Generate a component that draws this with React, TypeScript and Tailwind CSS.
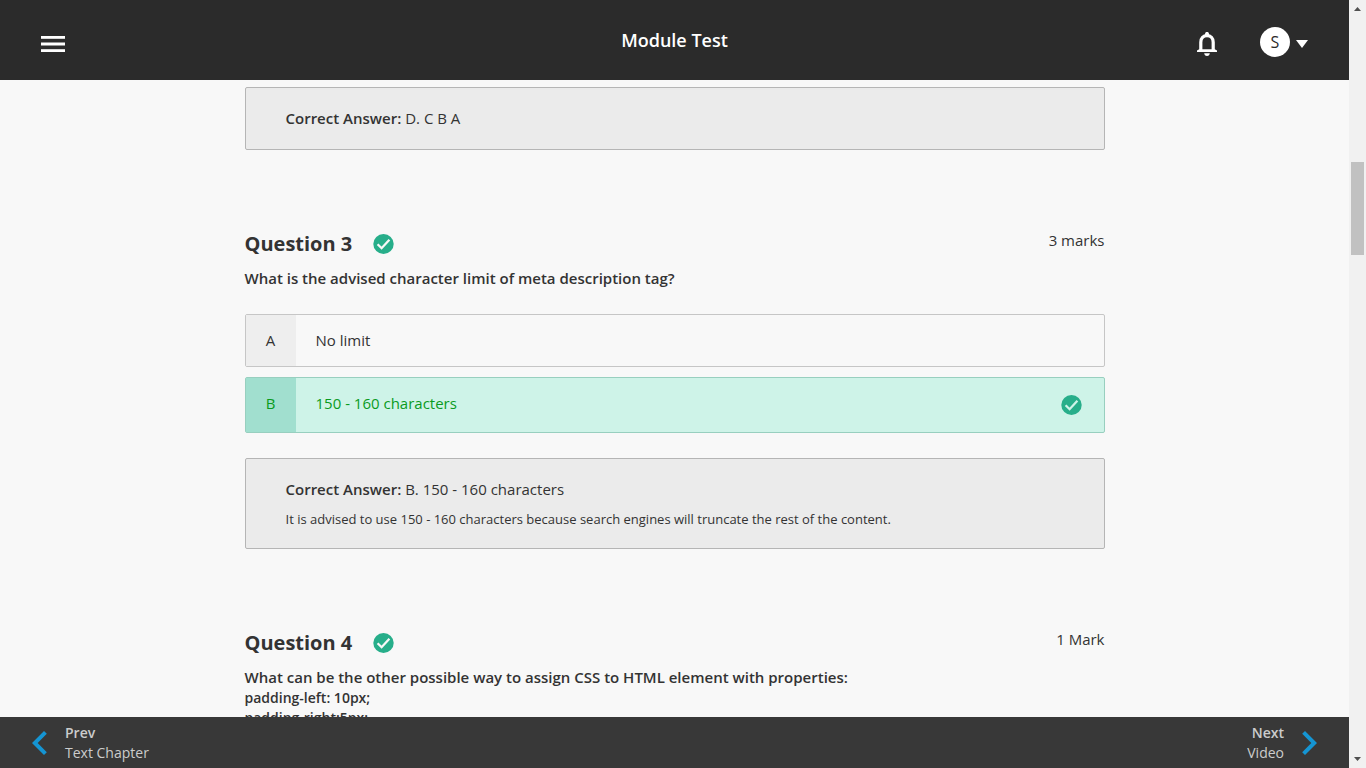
import React from "react";
import { MdChevronLeft, MdChevronRight } from "react-icons/md";

type Option = { letter: string; text: string; correct?: boolean };

function MenuIcon() {
  return (
    <svg width="24" height="16" viewBox="0 0 24 16" fill="currentColor" aria-hidden="true">
      <rect width="24" height="2.8" />
      <rect y="6.5" width="24" height="3" />
      <rect y="13.2" width="24" height="2.8" />
    </svg>
  );
}

function BellIcon() {
  return (
    <svg width="20" height="24" viewBox="0 0 20 24" aria-hidden="true">
      <path
        d="M3.8 18.6V10.2C3.8 6 6.3 3.6 10 3.6S16.2 6 16.2 10.2V18.6"
        fill="none"
        stroke="currentColor"
        strokeWidth="3.2"
      />
      <path d="M8 3.4V1.9a2 2 0 0 1 4 0V3.4Z" fill="currentColor" />
      <path d="M0 20V18.6L2.2 17.2H17.8L20 18.6V20Z" fill="currentColor" />
      <path d="M7.2 21.2H12.8C12.8 22.8 11.6 24 10 24S7.2 22.8 7.2 21.2Z" fill="currentColor" />
    </svg>
  );
}

function CheckBadge({ tick }: { tick: string }) {
  return (
    <svg width="21" height="20" viewBox="0 0 21 20" role="img" aria-label="Correct" className="shrink-0">
      <ellipse cx="10.5" cy="10" rx="10.2" ry="10" fill="#27ae8a" />
      <path d="M4.6 10.2L8.6 14.2L16.4 5.8" fill="none" stroke={tick} strokeWidth="2.3" />
    </svg>
  );
}

function TopBar() {
  return (
    <header className="grid h-20 shrink-0 grid-cols-[1fr_auto_1fr] items-center bg-[#2b2b2b] text-white">
      <div className="flex pt-2 pl-[41px]">
        <button type="button" aria-label="Open menu">
          <MenuIcon />
        </button>
      </div>
      <h1 className="text-lg font-semibold">Module Test</h1>
      <div className="flex items-center justify-end gap-[43px] pt-1 pr-[41px]">
        <button type="button" aria-label="Notifications" className="pt-1">
          <BellIcon />
        </button>
        <button type="button" aria-label="Account menu" className="flex items-center gap-1.5">
          <span className="flex size-[30px] items-center justify-center rounded-full bg-white text-base text-[#2b2b2b]">
            S
          </span>
          <svg width="12" height="8" viewBox="0 0 12 8" className="mt-1" fill="currentColor" aria-hidden="true">
            <path d="M0 0H12L6 8Z" />
          </svg>
        </button>
      </div>
    </header>
  );
}

function AnswerBox({ answer, note }: { answer: string; note?: string }) {
  return (
    <div className="rounded-xs border border-[#b5b5b5] bg-[#ebebeb] px-10 py-5">
      <p className="text-[15px] leading-[21px]">
        <span className="font-semibold">Correct Answer:</span> {answer}
      </p>
      {note && <p className="mt-2.5 text-[13px] leading-[18px]">{note}</p>}
    </div>
  );
}

function QuestionHeader({ title, marks }: { title: string; marks: string }) {
  return (
    <div className="flex items-start justify-between">
      <h2 className="flex items-center gap-[21px] text-xl leading-7 font-bold">
        {title}
        <CheckBadge tick="#f8f8f8" />
      </h2>
      <span className="text-[15px] leading-[21px]">{marks}</span>
    </div>
  );
}

function OptionRow({ letter, text, correct }: Option) {
  if (correct) {
    return (
      <li className="flex h-14 rounded-xs border border-[#98cfbf] bg-[#cef3e8] text-[15px] text-[#0a9b1e]">
        <span className="flex w-[50px] items-center justify-center bg-[#a1dfcf] pb-1">{letter}</span>
        <span className="flex flex-1 items-center px-5 pb-1">{text}</span>
        <span className="mr-[22px] flex items-center">
          <CheckBadge tick="#cef3e8" />
        </span>
      </li>
    );
  }
  return (
    <li className="flex h-[53px] rounded-xs border border-[#c6c6c6] text-[15px]">
      <span className="flex w-[50px] items-center justify-center bg-[#eeeeee]">{letter}</span>
      <span className="flex flex-1 items-center px-5">{text}</span>
    </li>
  );
}

const options: Option[] = [
  { letter: "A", text: "No limit" },
  { letter: "B", text: "150 - 160 characters", correct: true },
];

function BottomBar() {
  return (
    <nav className="flex h-[51px] shrink-0 items-center justify-between bg-[#383838] px-4 text-sm leading-5 text-[#cccccc]">
      <a href="#prev" className="flex items-center gap-px">
        <MdChevronLeft size={48} className="text-[#1595d3]" />
        <span>
          <span className="block font-semibold">Prev</span>
          <span className="block">Text Chapter</span>
        </span>
      </a>
      <a href="#next" className="flex items-center gap-px text-right">
        <span>
          <span className="block font-semibold">Next</span>
          <span className="block">Video</span>
        </span>
        <MdChevronRight size={48} className="text-[#1595d3]" />
      </a>
    </nav>
  );
}

function ScrollTrack() {
  return (
    <div className="flex w-[17px] shrink-0 flex-col items-center bg-[#f1f1f1] py-[7px]" aria-hidden="true">
      <svg width="7" height="4" viewBox="0 0 7 4" fill="#505050">
        <path d="M0 4H7L3.5 0Z" />
      </svg>
      <div className="mt-[151px] h-[93px] w-[13px] bg-[#c1c1c1]" />
      <svg width="7" height="4" viewBox="0 0 7 4" fill="#505050" className="mt-auto">
        <path d="M0 0H7L3.5 4Z" />
      </svg>
    </div>
  );
}

export default function App() {
  return (
    <div className="flex h-screen bg-[#f8f8f8] font-['Open_Sans',sans-serif] text-[#333333]">
      <div className="flex min-w-0 flex-1 flex-col">
        <TopBar />
        <main className="min-h-0 flex-1 overflow-hidden px-6 pt-[7px]">
          <div className="mx-auto max-w-[860px]">
            <AnswerBox answer="D. C B A" />
            <section className="mt-20">
              <QuestionHeader title="Question 3" marks="3 marks" />
              <p className="mt-2.5 text-[15px] leading-[21px] font-semibold">
                What is the advised character limit of meta description tag?
              </p>
              <ul className="mt-[25px] mb-[25px] flex flex-col gap-2.5">
                {options.map((o) => (
                  <OptionRow key={o.letter} {...o} />
                ))}
              </ul>
              <AnswerBox
                answer="B. 150 - 160 characters"
                note="It is advised to use 150 - 160 characters because search engines will truncate the rest of the content."
              />
            </section>
            <section className="mt-20">
              <QuestionHeader title="Question 4" marks="1 Mark" />
              <p className="mt-2.5 text-[15px] leading-[21px] font-semibold">
                What can be the other possible way to assign CSS to HTML element with properties:
              </p>
              <p className="text-sm leading-5 font-semibold">
                padding-left: 10px;
                <br />
                padding-right:5px;
              </p>
            </section>
          </div>
        </main>
        <BottomBar />
      </div>
      <ScrollTrack />
    </div>
  );
}
